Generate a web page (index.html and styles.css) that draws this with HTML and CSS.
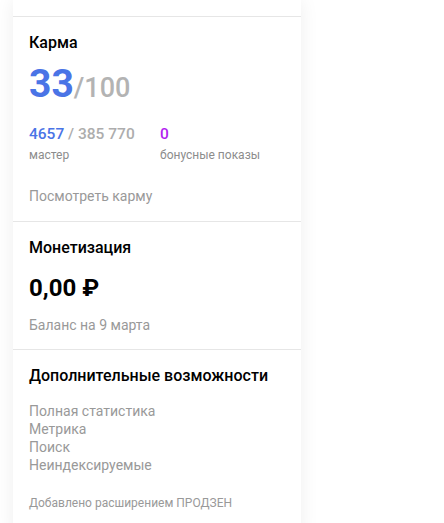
FILE: index.html
```html
<!DOCTYPE html>
<html lang="ru">
<head>
<meta charset="utf-8">
<link rel="stylesheet" href="styles.css">
</head>
<body>
<div class="page">
  <div class="card">
    <div class="section section--top"></div>
    <div class="section section--karma">
      <div class="title">Карма</div>
      <div class="score"><span class="score__value">33</span><span class="score__max">/100</span></div>
      <div class="stats">
        <div class="stat">
          <div class="stat__value"><span class="blue">4657</span><span class="muted"> / 385 770</span></div>
          <div class="stat__label">мастер</div>
        </div>
        <div class="stat">
          <div class="stat__value"><span class="purple">0</span></div>
          <div class="stat__label">бонусные показы</div>
        </div>
      </div>
      <div class="link">Посмотреть карму</div>
    </div>
    <div class="section">
      <div class="title">Монетизация</div>
      <div class="money">0,00 ₽</div>
      <div class="link link--balance">Баланс на 9 марта</div>
    </div>
    <div class="section section--last">
      <div class="title">Дополнительные возможности</div>
      <ul class="list">
        <li>Полная статистика</li>
        <li>Метрика</li>
        <li>Поиск</li>
        <li>Неиндексируемые</li>
      </ul>
      <div class="note">Добавлено расширением ПРОДЗЕН</div>
    </div>
  </div>
</div>
</body>
</html>
```

FILE: styles.css
```css
html, body {
  margin: 0;
  padding: 0;
  background: #fff;
}
body {
  font-family: Roboto, "Noto Sans", Arial, sans-serif;
  color: #000;
  overflow: hidden;
}
.page {
  padding-left: 13px;
}
.card {
  width: 288px;
  background: #fff;
  box-shadow: 0 0 18px rgba(0, 0, 0, 0.07);
  padding-bottom: 10px;
}
.section {
  padding: 16px 16px 15px;
  border-bottom: 1px solid #e6e6e6;
}
.section--karma {
  padding-bottom: 16px;
}
.section--top {
  height: 17px;
  padding: 0;
  box-sizing: border-box;
}
.section--last {
  border-bottom: 0;
}
.title {
  font-size: 16px;
  line-height: 20px;
  font-weight: 500;
}
.score {
  margin-top: 7px;
  line-height: 48px;
  font-weight: 700;
}
.score__value {
  font-size: 39px;
  color: #4a74e6;
}
.score__max {
  font-size: 27px;
  font-weight: 500;
  color: #b3b3b3;
}
.stats {
  display: flex;
  margin-top: 8px;
}
.stat {
  flex: 0 0 131px;
}
.stat__value {
  font-size: 15.5px;
  line-height: 20px;
  font-weight: 500;
}
.blue { color: #4a74e6; }
.muted { color: #adadad; }
.purple { color: #b21ff0; }
.stat__label {
  margin-top: 3px;
  font-size: 12px;
  line-height: 16px;
  color: #8c8c8c;
}
.link {
  margin-top: 24px;
  font-size: 14px;
  line-height: 18px;
  color: #999;
}
.money {
  margin-top: 14px;
  font-size: 24px;
  line-height: 32px;
  font-weight: 700;
}
.link--balance {
  margin-top: 12px;
}
.list {
  list-style: none;
  margin: 16px 0 0;
  padding: 0;
  font-size: 14px;
  line-height: 18px;
  color: #999;
}
.note {
  margin-top: 21px;
  font-size: 12px;
  line-height: 16px;
  color: #999;
}
```
